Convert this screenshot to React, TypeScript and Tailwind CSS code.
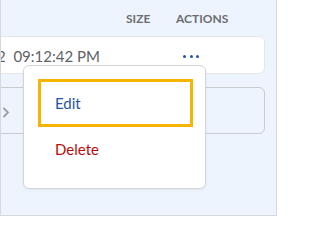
import React from "react";

export default function App() {
  return (
    <div
      className="relative w-[277px] h-[216px] overflow-hidden bg-[#eef4fd] border-l border-r border-b border-[#d6d8db]"
      style={{ fontFamily: "Lato, 'Open Sans', sans-serif" }}
    >
      <div className="flex items-center h-[38px] pb-[1px] text-[12px] font-bold text-[#6a6d70]">
        <span className="ml-[125px] w-[50px]">SIZE</span>
        <span>ACTIONS</span>
      </div>
      <div className="mt-[-2px] ml-[-12px] mr-[11px] h-[38px] flex items-center pt-[2px] bg-white border border-[#e4e6e8] rounded-[6px]">
        <span className="ml-[7px] text-[15px] text-[#5f6266] w-[182px] whitespace-pre">2  09:12:42 PM</span>
        <span className="ml-[4px] flex gap-[3.5px]">
          <span className="w-[3px] h-[3px] rounded-full bg-[#1f56a4]" />
          <span className="w-[3px] h-[3px] rounded-full bg-[#1f56a4]" />
          <span className="w-[3px] h-[3px] rounded-full bg-[#1f56a4]" />
        </span>
      </div>
      <div className="mt-[13px] ml-[-12px] mr-[11px] h-[47px] flex items-center border border-[#c9cbce] rounded-[6px]">
        <svg className="ml-[12px] mt-[3px]" width="8" height="11" viewBox="0 0 8 11">
          <path d="M1.5 1 L6 5.5 L1.5 10" fill="none" stroke="#9a9da1" strokeWidth="1.8" />
        </svg>
      </div>
      <div className="absolute left-[22px] top-[65px] w-[183px] h-[124px] bg-white border border-[#d3d5d8] rounded-[6px] shadow-[0_1px_3px_rgba(0,0,0,0.06)]">
        <div className="mt-[13px] ml-[14px] w-[155px] h-[48px] border-[3px] border-[#f5b400] flex items-center pl-[14px] text-[15px] text-[#1f56a4]">
          Edit
        </div>
        <div className="ml-[14px] h-[44px] flex items-center pl-[17px] text-[15px] text-[#b80b0b]">
          Delete
        </div>
      </div>
    </div>
  );
}
